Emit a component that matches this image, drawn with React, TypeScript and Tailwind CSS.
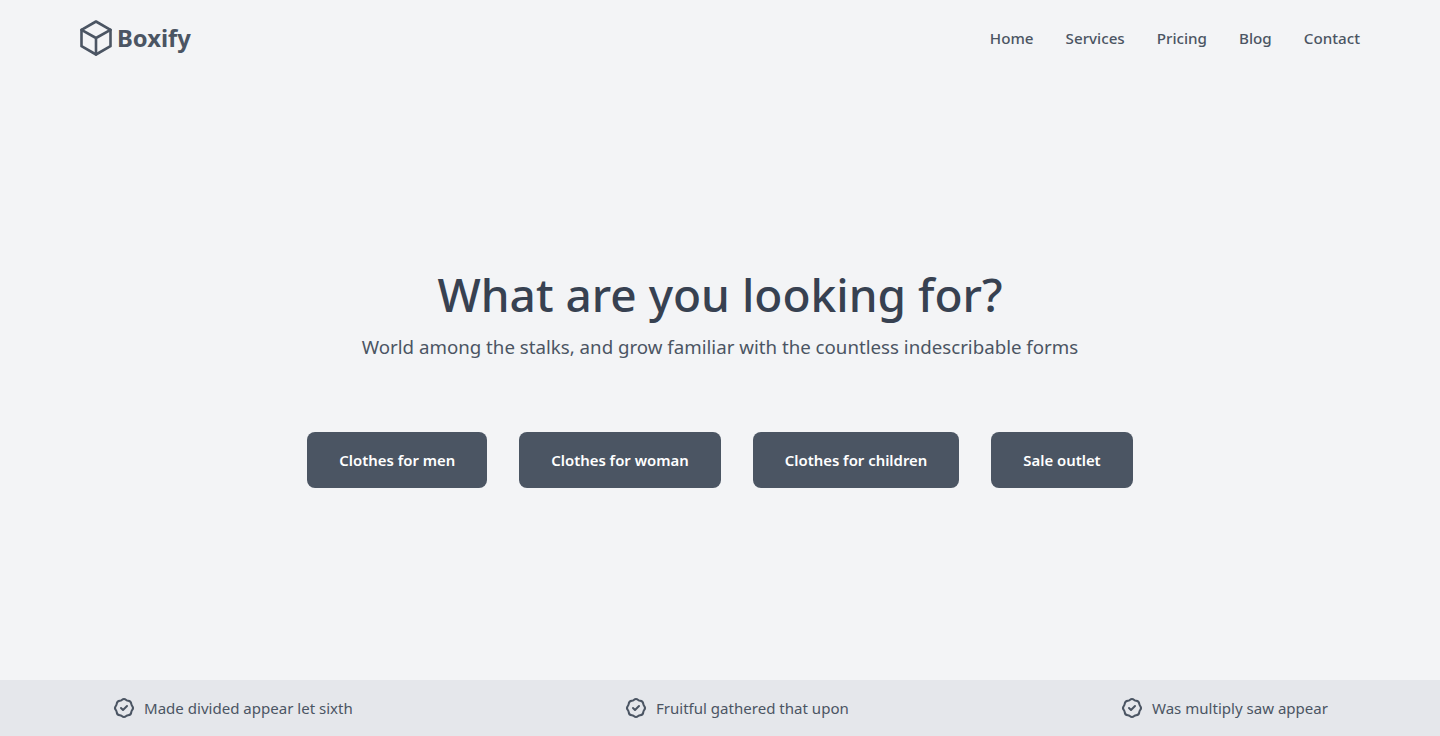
import { HiOutlineBadgeCheck } from 'react-icons/hi';

const navLinks = ['Home', 'Services', 'Pricing', 'Blog', 'Contact'];
const categories = ['Clothes for men', 'Clothes for woman', 'Clothes for children', 'Sale outlet'];
const perks = ['Made divided appear let sixth', 'Fruitful gathered that upon', 'Was multiply saw appear'];

function BoxLogo() {
  return (
    <svg viewBox="0 0 32 36" className="h-9 w-8 text-[#4b5563]" fill="none" stroke="currentColor" strokeWidth={2.6} strokeLinejoin="round" strokeLinecap="round">
      <path d="M16 1.5 30.5 9.8V26.2L16 34.5 1.5 26.2V9.8Z" />
      <path d="M1.5 9.8 16 18 30.5 9.8M16 18V34.5" />
    </svg>
  );
}

export default function App() {
  return (
    <div className="flex h-[736px] flex-col bg-[#f3f4f6] font-['Noto_Sans',sans-serif] text-[#4b5563]">
      {/* Header */}
      <header className="flex h-[76px] items-center justify-between px-20">
        <a className="flex items-center gap-[5px] text-[#4b5563]">
          <BoxLogo />
          <span className="mt-px text-[23.8px] font-bold">Boxify</span>
        </a>
        <nav className="flex items-center gap-8">
          {navLinks.map((link) => (
            <a key={link} className="text-[15.2px] font-medium text-[#4b5563]">
              {link}
            </a>
          ))}
        </nav>
      </header>

      {/* Hero */}
      <main className="flex flex-1 flex-col items-center pt-[187px]">
        <h1 className="text-[46px] leading-[62px] font-medium text-[#374151]">What are you looking for?</h1>
        <p className="mt-2 text-[18.7px] leading-[28px] text-[#4b5563]">
          World among the stalks, and grow familiar with the countless indescribable forms
        </p>
        <div className="mt-[71px] flex gap-8">
          {categories.map((category) => (
            <button key={category} className="h-14 rounded-lg bg-[#4b5563] px-8 text-[14.9px] font-semibold text-white">
              {category}
            </button>
          ))}
        </div>
      </main>

      {/* Perks */}
      <footer className="flex h-14 items-center justify-between bg-[#e5e7eb] pr-[112px] pl-[112px]">
        {perks.map((perk) => (
          <div key={perk} className="flex items-center gap-2">
            <HiOutlineBadgeCheck size={24} className="text-[#4b5563]" />
            <span className="text-[15.05px] text-[#4b5563]">{perk}</span>
          </div>
        ))}
      </footer>
    </div>
  );
}
